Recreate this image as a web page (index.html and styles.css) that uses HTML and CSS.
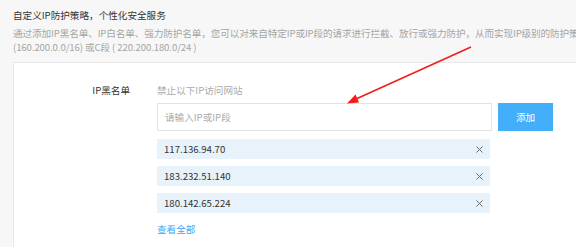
FILE: index.html
```html
<!DOCTYPE html>
<html lang="zh-CN">
<head>
<meta charset="utf-8">
<title>IP防护策略</title>
<link rel="stylesheet" href="styles.css">
</head>
<body>
<div class="page">
  <div class="intro">
    <div class="title">自定义IP防护策略，个性化安全服务</div>
    <div class="desc">通过添加IP黑名单、IP白名单、强力防护名单，您可以对来自特定IP或IP段的请求进行拦截、放行或强力防护，从而实现IP级别的防护策略，支持添加单个IP或IP段，如B段</div>
    <div class="desc">(160.200.0.0/16) 或C段 ( 220.200.180.0/24 )</div>
  </div>
  <div class="card">
    <div class="field">
      <div class="label">IP黑名单</div>
      <div class="control">
        <div class="hint">禁止以下IP访问网站</div>
        <div class="input-row">
          <div class="input">请输入IP或IP段</div>
          <div class="btn">添加</div>
        </div>
        <ul class="list">
          <li class="item"><span>117.136.94.70</span><svg class="close" viewBox="0 0 8 8"><path d="M0.5 0.5L7.5 7.5M7.5 0.5L0.5 7.5"/></svg></li>
          <li class="item"><span>183.232.51.140</span><svg class="close" viewBox="0 0 8 8"><path d="M0.5 0.5L7.5 7.5M7.5 0.5L0.5 7.5"/></svg></li>
          <li class="item"><span>180.142.65.224</span><svg class="close" viewBox="0 0 8 8"><path d="M0.5 0.5L7.5 7.5M7.5 0.5L0.5 7.5"/></svg></li>
        </ul>
        <div class="more">查看全部</div>
      </div>
    </div>
  </div>
</div>
<svg class="arrow" width="576" height="247" viewBox="0 0 576 247">
  <line x1="471" y1="47" x2="356" y2="99" stroke="#f21c1c" stroke-width="1.6"/>
  <polygon points="347,103.5 355.5,94.5 359,102.5" fill="#f21c1c"/>
</svg>
</body>
</html>
```
FILE: styles.css
```css
html, body {
  margin: 0;
  padding: 0;
}
body {
  background: #f7f7f7;
  font-family: "Noto Sans CJK SC", "Noto Sans", sans-serif;
  font-size: 9.6px;
  color: #333;
  overflow: hidden;
  width: 576px;
  height: 247px;
  position: relative;
}
.page {
  width: 760px;
  padding: 8px 0 0 13px;
}
.title {
  line-height: 14px;
  color: #333;
}
.intro {
  display: flex;
  flex-direction: column;
}
.desc {
  line-height: 14px;
  color: #a5a5a5;
  white-space: nowrap;
  letter-spacing: -0.1px;
}
.title + .desc {
  margin-top: 4px;
}
.card {
  margin-top: 8px;
  background: #fff;
  border: 1px solid #e8e8e8;
  padding: 20px 0 30px;
}
.field {
  display: grid;
  grid-template-columns: 116px 1fr;
  column-gap: 27px;
}
.label {
  text-align: right;
  line-height: 14px;
  color: #333;
}
.control {
  display: flex;
  flex-direction: column;
}
.hint {
  line-height: 14px;
  color: #aaa;
}
.input-row {
  margin-top: 6px;
  display: flex;
  gap: 6px;
}
.input {
  box-sizing: border-box;
  width: 335px;
  height: 28px;
  border: 1px solid #e3e3e3;
  padding-left: 7px;
  line-height: 26px;
  color: #aaa;
}
.btn {
  box-sizing: border-box;
  width: 55px;
  height: 28px;
  background: #43aefa;
  color: #fff;
  text-align: center;
  line-height: 28px;
}
.list {
  list-style: none;
  margin: 8px 0 0;
  padding: 0;
  display: flex;
  flex-direction: column;
  gap: 7px;
  width: 333px;
}
.item {
  height: 20px;
  background: #e8f2fb;
  display: flex;
  align-items: center;
  justify-content: space-between;
  padding: 0 7px 0 7px;
  color: #333;
}
.close {
  width: 7px;
  height: 7px;
}
.close path {
  stroke: #666;
  stroke-width: 1.1;
  fill: none;
}
.more {
  margin-top: 9px;
  line-height: 14px;
  color: #3ea8f5;
}
.arrow {
  position: absolute;
  left: 0;
  top: 0;
  pointer-events: none;
}
```
